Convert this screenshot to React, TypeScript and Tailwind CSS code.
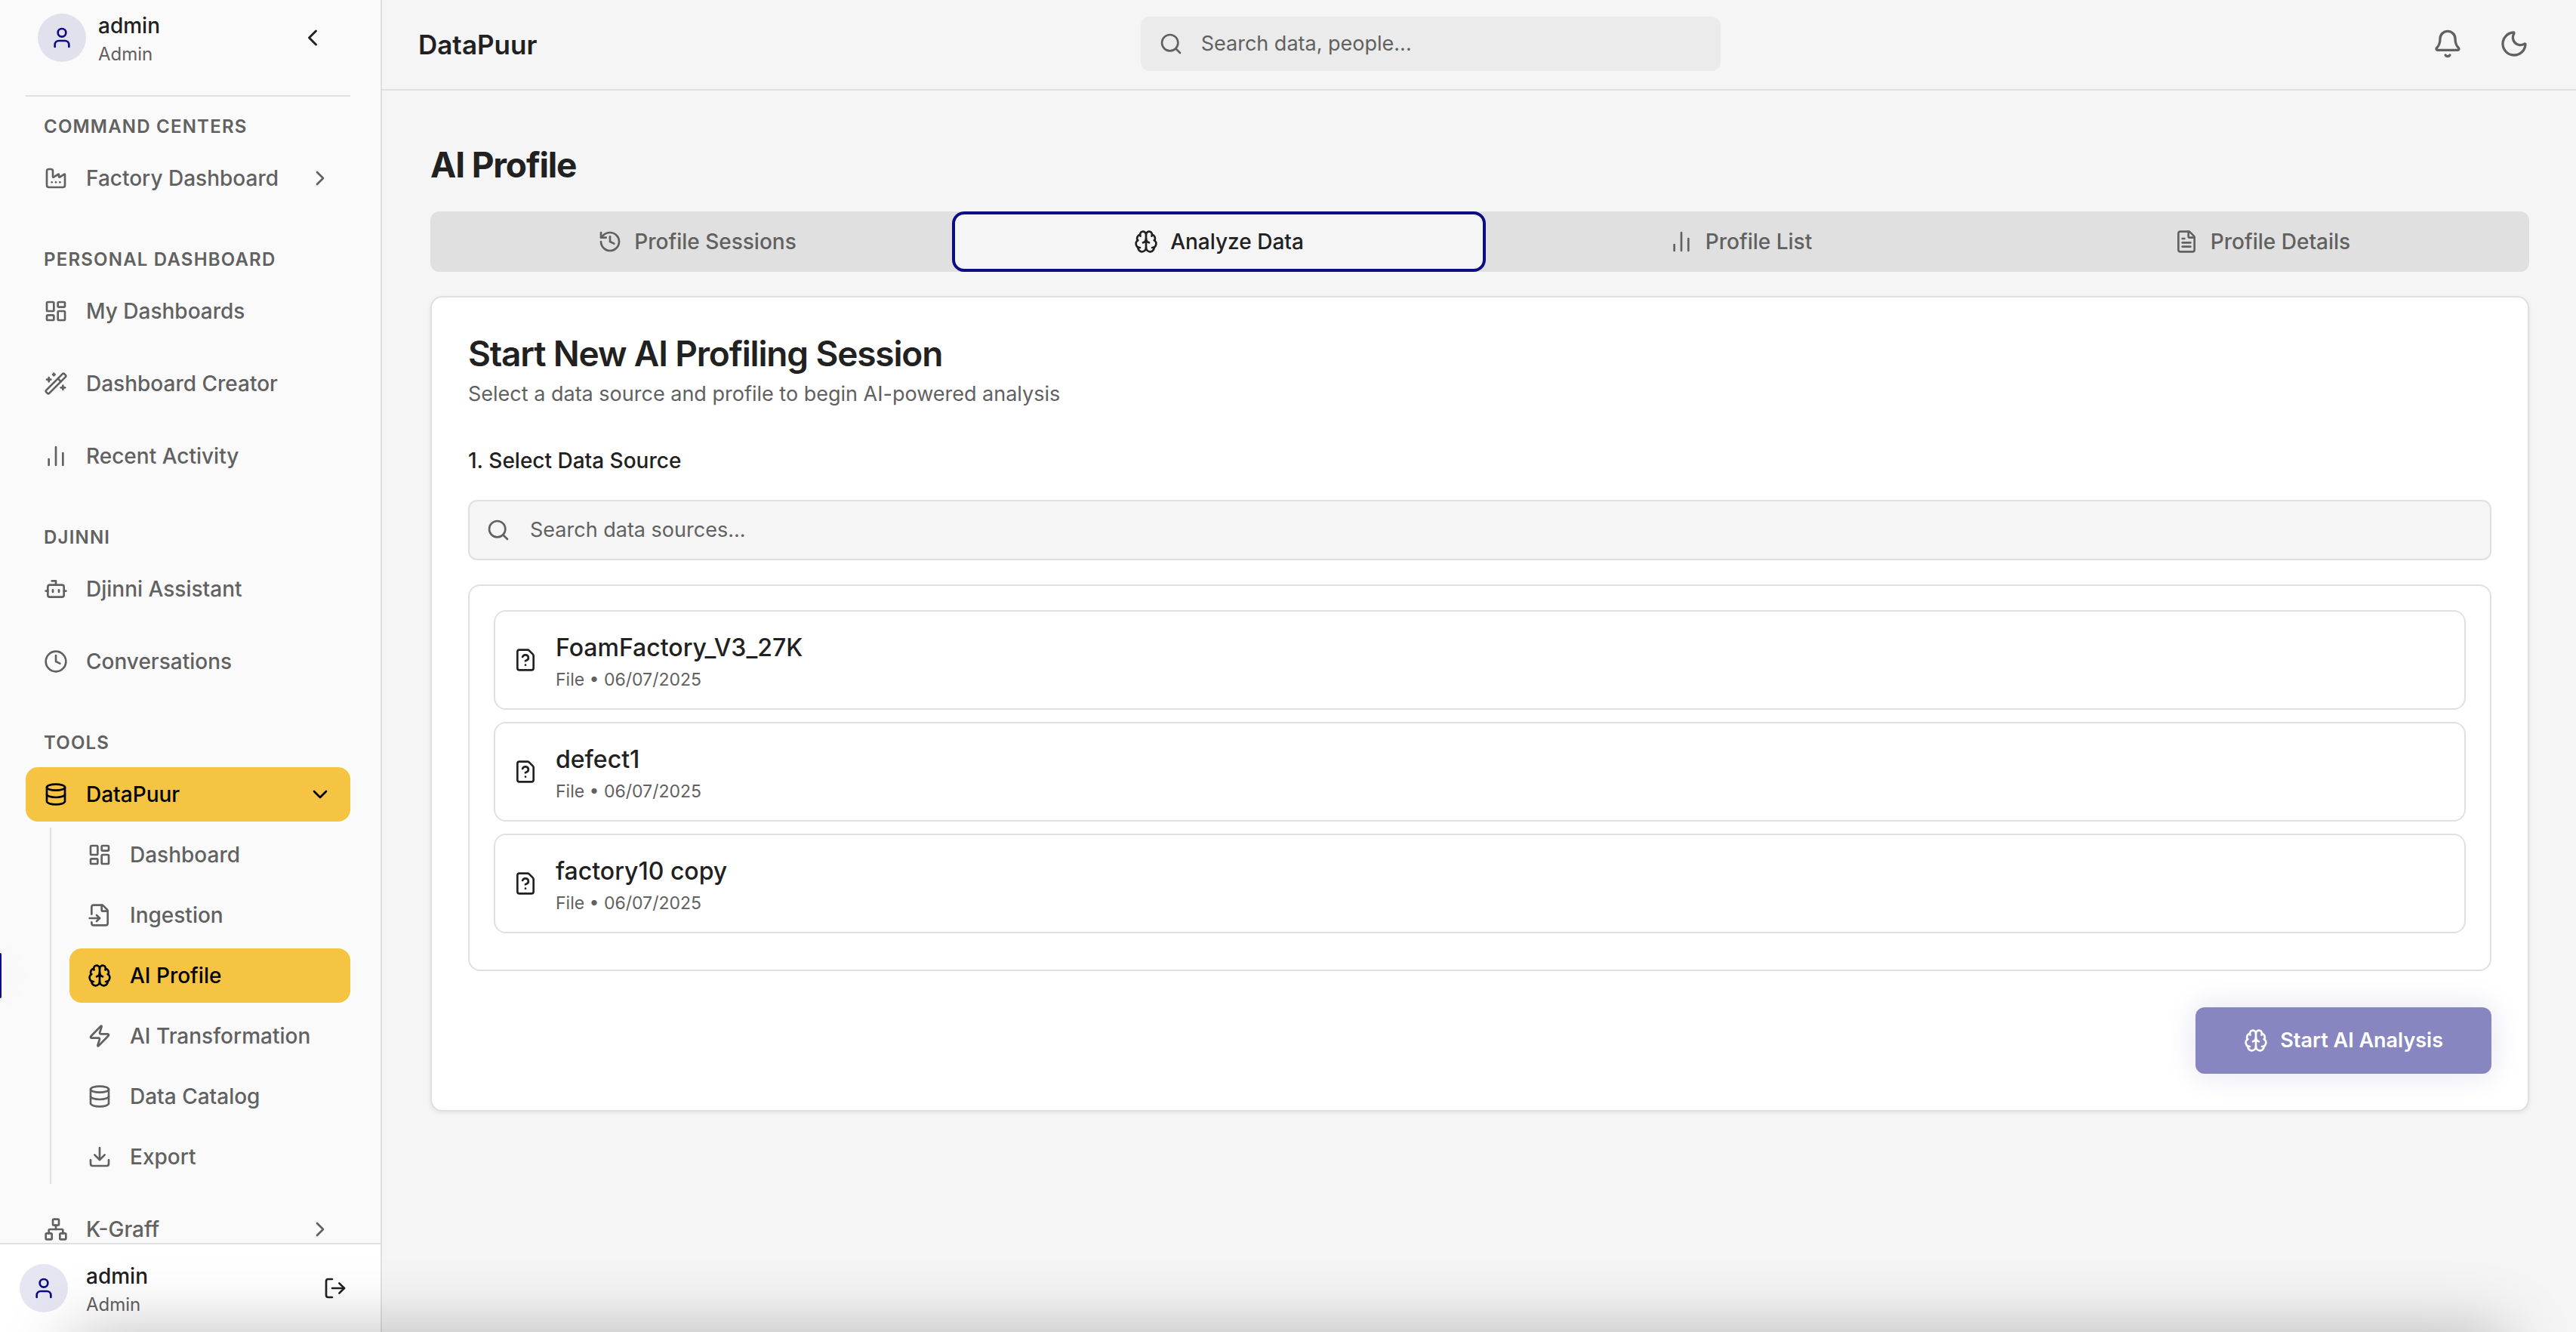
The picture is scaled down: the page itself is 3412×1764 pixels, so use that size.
import {
  Bell,
  Bot,
  Brain,
  ChartNoAxesColumn,
  ChevronDown,
  ChevronLeft,
  ChevronRight,
  Clock,
  Database,
  Download,
  Factory,
  FileInput,
  FileQuestionMark,
  FileText,
  History,
  LayoutDashboard,
  LogOut,
  Moon,
  Network,
  Search,
  User,
  WandSparkles,
  Zap,
} from "lucide-react";
import type { LucideIcon } from "lucide-react";

type NavEntry = { label: string; icon: LucideIcon; expandable?: boolean };
type NavGroup = { title: string; items: NavEntry[] };

const groups: NavGroup[] = [
  { title: "Command Centers", items: [{ label: "Factory Dashboard", icon: Factory, expandable: true }] },
  {
    title: "Personal Dashboard",
    items: [
      { label: "My Dashboards", icon: LayoutDashboard },
      { label: "Dashboard Creator", icon: WandSparkles },
      { label: "Recent Activity", icon: ChartNoAxesColumn },
    ],
  },
  {
    title: "Djinni",
    items: [
      { label: "Djinni Assistant", icon: Bot },
      { label: "Conversations", icon: Clock },
    ],
  },
];

const dataPuurPages: NavEntry[] = [
  { label: "Dashboard", icon: LayoutDashboard },
  { label: "Ingestion", icon: FileInput },
  { label: "AI Profile", icon: Brain },
  { label: "AI Transformation", icon: Zap },
  { label: "Data Catalog", icon: Database },
  { label: "Export", icon: Download },
];

const tabs: NavEntry[] = [
  { label: "Profile Sessions", icon: History },
  { label: "Analyze Data", icon: Brain },
  { label: "Profile List", icon: ChartNoAxesColumn },
  { label: "Profile Details", icon: FileText },
];

const sources = ["FoamFactory_V3_27K", "defect1", "factory10 copy"];

function Avatar() {
  return (
    <span className="flex size-16 shrink-0 items-center justify-center rounded-full bg-[#0c0c84]/10">
      <User className="size-8 text-[#0c0c84]" />
    </span>
  );
}

function Account() {
  return (
    <div className="flex-1 pt-2">
      <p className="text-[28px] leading-9 font-medium text-[#212121]">admin</p>
      <p className="text-2xl leading-10 text-[#616161]">Admin</p>
    </div>
  );
}

function SectionTitle({ children }: { children: string }) {
  return (
    <h2 className="mb-4 px-6 text-2xl leading-8 font-semibold tracking-wider text-[#616161] uppercase">{children}</h2>
  );
}

function NavLink({ entry, active }: { entry: NavEntry; active?: boolean }) {
  const Icon = entry.icon;
  return (
    <a
      href="#"
      className={
        active
          ? "flex h-18 items-center gap-6 rounded-2xl bg-[#f5c443] px-6 text-[28px] font-medium text-black"
          : "flex h-18 items-center gap-6 rounded-2xl px-6 text-[28px] font-medium text-[#616161]"
      }
    >
      <Icon className="size-8 shrink-0" />
      <span className="flex-1 whitespace-nowrap">{entry.label}</span>
      {entry.expandable && (active ? <ChevronDown className="size-8" /> : <ChevronRight className="size-8" />)}
    </a>
  );
}

function Sidebar() {
  return (
    <aside className="relative flex w-[506px] shrink-0 flex-col border-r-2 border-[#e0e0e0] bg-[#fafafa]">
      <div className="flex min-h-0 flex-1 flex-col overflow-hidden pr-10 pl-[34px]">
        <div className="flex h-32 shrink-0 items-start gap-4 border-b-2 border-[#e0e0e0] px-4 pt-2">
          <div className="pt-2.5">
            <Avatar />
          </div>
          <Account />
          <button type="button" aria-label="Collapse sidebar" className="flex h-21 w-17 items-center justify-center text-[#212121]">
            <ChevronLeft className="size-9" />
          </button>
        </div>
        <nav className="flex flex-col gap-14 pt-6">
          {groups.map((group) => (
            <section key={group.title}>
              <SectionTitle>{group.title}</SectionTitle>
              <div className="flex flex-col gap-6">
                {group.items.map((item) => (
                  <NavLink key={item.label} entry={item} />
                ))}
              </div>
            </section>
          ))}
          <section>
            <SectionTitle>Tools</SectionTitle>
            <NavLink entry={{ label: "DataPuur", icon: Database, expandable: true }} active />
            <div className="mt-2 mb-6 ml-8 flex flex-col gap-2 border-l-2 border-[#e0e0e0] pl-6">
              {dataPuurPages.map((page) => (
                <NavLink key={page.label} entry={page} active={page.label === "AI Profile"} />
              ))}
            </div>
            <NavLink entry={{ label: "K-Graff", icon: Network, expandable: true }} />
          </section>
        </nav>
      </div>
      <span className="absolute top-[1262px] left-0 h-[60px] w-[2px] rounded-r-sm bg-[#0c0c84] shadow-[0_0_40px_rgba(12,12,132,0.25)]" />
      <div className="flex h-[118px] shrink-0 items-center gap-6 border-t-2 border-[#e0e0e0] bg-white px-[26px]">
        <Avatar />
        <Account />
        <button type="button" aria-label="Log out" className="flex size-17 items-center justify-center text-[#212121]">
          <LogOut className="size-8" />
        </button>
      </div>
    </aside>
  );
}

function Header() {
  return (
    <header className="flex h-30 shrink-0 items-center justify-between border-b-2 border-[#e0e0e0] pr-[46px] pl-12">
      <p className="text-[35px] font-semibold text-[#212121]">DataPuur</p>
      <label className="mb-0.5 flex h-18 w-3xl items-center gap-6 rounded-xl bg-[#ebebeb] px-6 text-[#616161]">
        <Search className="size-8 shrink-0" />
        <input
          type="text"
          aria-label="Search data, people"
          placeholder="Search data, people..."
          className="min-w-0 flex-1 bg-transparent text-[27px] outline-none placeholder:text-[#616161]"
        />
      </label>
      <div className="mb-0.5 flex w-72 justify-end gap-4 text-[#616161]">
        <button type="button" aria-label="Notifications" className="flex size-18 items-center justify-center">
          <Bell className="size-10" />
        </button>
        <button type="button" aria-label="Toggle dark mode" className="flex size-18 items-center justify-center">
          <Moon className="size-10" />
        </button>
      </div>
    </header>
  );
}

function Tabs() {
  return (
    <div role="tablist" className="grid h-20 grid-cols-4 rounded-xl bg-[#e0e0e0] px-2">
      {tabs.map(({ label, icon: Icon }) => {
        const active = label === "Analyze Data";
        return (
          <button
            key={label}
            type="button"
            role="tab"
            aria-selected={active}
            className={
              active
                ? "-mx-2 flex items-center justify-center gap-4 rounded-2xl border-4 border-[#0c0c84] bg-[#f5f5f5] text-[28px] font-medium text-[#212121]"
                : "flex items-center justify-center gap-4 text-[28px] font-medium text-[#616161]"
            }
          >
            <Icon className="size-8" />
            {label}
          </button>
        );
      })}
    </div>
  );
}

function SourceCard({ name }: { name: string }) {
  return (
    <button
      type="button"
      className="flex h-33 items-center gap-6 rounded-2xl border-2 border-[#e0e0e0] bg-white px-6 text-left text-[#212121]"
    >
      <FileQuestionMark className="size-8 shrink-0" />
      <span className="flex flex-col pt-2">
        <span className="text-[32px] leading-11 font-medium">{name}</span>
        <span className="text-[23px] leading-10 text-[#616161]">File • 06/07/2025</span>
      </span>
    </button>
  );
}

function StartSession() {
  return (
    <section className="flex flex-col rounded-2xl border-2 border-[#e0e0e0] bg-white p-12 shadow-[0_2px_6px_rgba(0,0,0,0.08)]">
      <h2 className="text-[46px] leading-13 font-semibold tracking-tight text-[#212121]">Start New AI Profiling Session</h2>
      <p className="mt-2 text-[27px] leading-10 text-[#616161]">Select a data source and profile to begin AI-powered analysis</p>
      <h3 className="mt-12 text-[28px] leading-10 font-medium text-[#212121]">1. Select Data Source</h3>
      <label className="mt-8 flex h-20 items-center gap-6.5 rounded-xl border-2 border-[#e0e0e0] bg-[#f5f5f5] px-5.5 text-[#616161]">
        <Search className="size-8 shrink-0" />
        <input
          type="text"
          aria-label="Search data sources"
          placeholder="Search data sources..."
          className="min-w-0 flex-1 bg-transparent text-[27px] outline-none placeholder:text-[#616161]"
        />
      </label>
      <div className="mt-8 flex flex-col gap-4 rounded-2xl border-2 border-[#e0e0e0] px-8 pt-8 pb-12">
        {sources.map((name) => (
          <SourceCard key={name} name={name} />
        ))}
      </div>
      <button
        type="button"
        className="mt-12 flex h-22 items-center gap-4 self-end rounded-xl bg-[#8786c1] px-16 text-[27px] font-semibold text-white shadow-[0_0_40px_rgba(12,12,132,0.12)]"
      >
        <Brain className="size-8" />
        Start AI Analysis
      </button>
    </section>
  );
}

export default function App() {
  return (
    <div className="relative flex h-screen overflow-hidden bg-[#f5f5f5] font-[Inter,sans-serif]">
      <Sidebar />
      <div className="flex min-w-0 flex-1 flex-col">
        <Header />
        <main className="flex flex-col gap-8 pt-[72px] pr-[62px] pl-16">
          <h1 className="mb-1 text-[46px] leading-13 font-bold tracking-tight text-[#212121]">AI Profile</h1>
          <Tabs />
          <StartSession />
        </main>
      </div>
      <div className="pointer-events-none absolute top-full right-24 left-24 h-40 shadow-[0_0_90px_rgba(0,0,0,0.26)]" />
    </div>
  );
}
